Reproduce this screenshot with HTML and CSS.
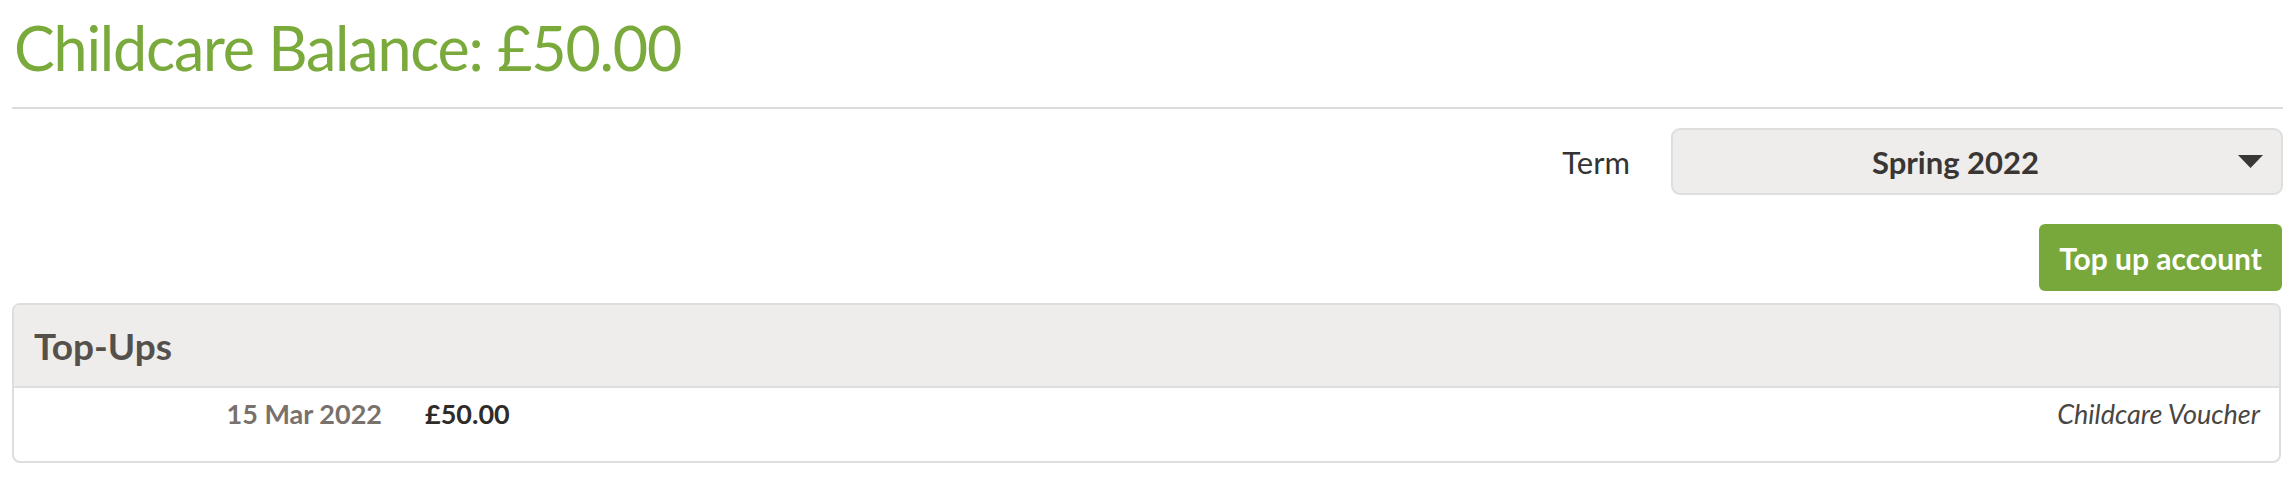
FILE: index.html
```html
<!DOCTYPE html>
<html lang="en">
<head>
<meta charset="utf-8">
<title>Childcare Balance</title>
<link rel="stylesheet" href="styles.css">
</head>
<body>
<div class="page">
  <h1 class="title">Childcare Balance: £50.00</h1>
  <hr class="divider">
  <div class="term-row">
    <span class="term-label">Term</span>
    <div class="select">
      <span class="select-value">Spring 2022</span>
      <svg class="select-arrow" width="25" height="13" viewBox="0 0 25 13"><polygon points="0,0 25,0 12.5,13" fill="#3a3633"/></svg>
    </div>
  </div>
  <div class="action-row">
    <button class="btn-topup">Top up account</button>
  </div>
  <div class="panel">
    <div class="panel-header">Top-Ups</div>
    <div class="panel-row">
      <span class="cell-date">15 Mar 2022</span>
      <span class="cell-amount">£50.00</span>
      <span class="cell-desc">Childcare Voucher</span>
    </div>
  </div>
</div>
</body>
</html>
```

FILE: styles.css
```css
* { box-sizing: border-box; }
body {
  margin: 0;
  font-family: "Lato", "Liberation Sans", sans-serif;
  color: #333;
  background: #fff;
}
.page {
  padding: 0 13px 0 12px;
}
.title {
  margin: 12px 0 0 0;
  font-size: 61px;
  line-height: 72px;
  font-weight: 400;
  letter-spacing: -1.2px;
  color: #7aaa3c;
  padding-left: 2px;
}
.divider {
  margin: 23px 0 0 0;
  border: 0;
  height: 2px;
  background: #dcdcdc;
}
.term-row {
  display: flex;
  justify-content: flex-end;
  align-items: center;
  gap: 41px;
  margin-top: 19px;
}
.term-label {
  font-size: 31px;
  color: #333;
}
.select {
  width: 612px;
  height: 67px;
  display: flex;
  align-items: center;
  background: #eeedeb;
  border: 2px solid #dedede;
  border-radius: 9px;
  padding-right: 18px;
}
.select-value {
  flex: 1;
  text-align: center;
  font-size: 31px;
  font-weight: 700;
  color: #3a3633;
}
.select-arrow { display: block; }
.action-row {
  display: flex;
  justify-content: flex-end;
  margin-top: 29px;
  padding-right: 1px;
}
.btn-topup {
  height: 67px;
  padding: 0 20px;
  background: #78a83b;
  color: #fff;
  border: 0;
  border-radius: 6px;
  font-family: inherit;
  font-size: 30px;
  font-weight: 700;
}
.panel {
  margin-top: 12px;
  margin-right: 2px;
  border: 2px solid #dedede;
  border-radius: 8px;
  overflow: hidden;
}
.panel-header {
  background: #eeedeb;
  border-bottom: 2px solid #dedede;
  height: 83px;
  padding: 19px 20px 0 20px;
  font-size: 37px;
  line-height: 44px;
  font-weight: 700;
  color: #55504c;
}
.panel-row {
  display: grid;
  grid-template-columns: 368px auto 1fr;
  align-items: start;
  height: 73px;
  padding: 11px 19px 0 0;
  font-size: 27px;
  line-height: 30px;
}
.cell-date {
  text-align: right;
  color: #78716c;
  font-weight: 700;
}
.cell-amount {
  margin-left: 43px;
  color: #2f2b29;
  font-weight: 700;
}
.cell-desc {
  text-align: right;
  font-style: italic;
  color: #4a4643;
}
```
